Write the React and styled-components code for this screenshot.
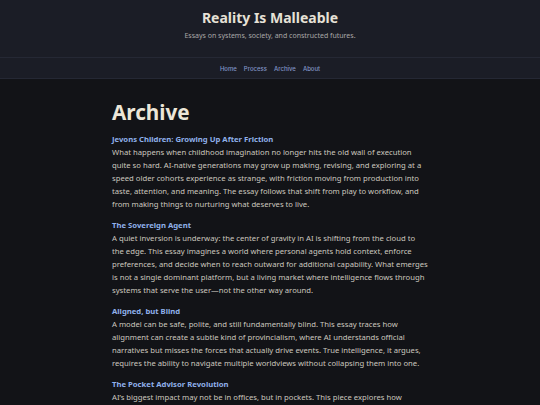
import React from 'react';
import styled, { createGlobalStyle } from 'styled-components';

const GlobalStyle = createGlobalStyle`
  html, body {
    margin: 0;
    padding: 0;
    background: #121317;
  }
  body {
    font-family: "Noto Sans", "Open Sans", sans-serif;
    color: #cbc7bf;
  }
  * { box-sizing: border-box; }
`;

const essays = [
  {
    title: 'Jevons Children: Growing Up After Friction',
    text:
      'What happens when childhood imagination no longer hits the old wall of execution quite so hard. AI-native generations may grow up making, revising, and exploring at a speed older cohorts experience as strange, with friction moving from production into taste, attention, and meaning. The essay follows that shift from play to workflow, and from making things to nurturing what deserves to live.',
  },
  {
    title: 'The Sovereign Agent',
    text:
      'A quiet inversion is underway: the center of gravity in AI is shifting from the cloud to the edge. This essay imagines a world where personal agents hold context, enforce preferences, and decide when to reach outward for additional capability. What emerges is not a single dominant platform, but a living market where intelligence flows through systems that serve the user\u2014not the other way around.',
  },
  {
    title: 'Aligned, but Blind',
    text:
      'A model can be safe, polite, and still fundamentally blind. This essay traces how alignment can create a subtle kind of provincialism, where AI understands official narratives but misses the forces that actually drive events. True intelligence, it argues, requires the ability to navigate multiple worldviews without collapsing them into one.',
  },
  {
    title: 'The Pocket Advisor Revolution',
    text:
      'AI\u2019s biggest impact may not be in offices, but in pockets. This piece explores how personal advisors could reshape everyday decisions for people who never had access to expert counsel.',
  },
];

const navLinks = ['Home', 'Process', 'Archive', 'About'];

const App = () => {
  return (
    <>
      <GlobalStyle />
      <SiteHeader>
        <SiteTitle>Reality Is Malleable</SiteTitle>
        <Tagline>Essays on systems, society, and constructed futures.</Tagline>
      </SiteHeader>
      <NavBar>
        {navLinks.map(link => (
          <NavLink key={link} href="#">
            {link}
          </NavLink>
        ))}
      </NavBar>
      <Main>
        <PageTitle>Archive</PageTitle>
        <EssayList>
          {essays.map(essay => (
            <Essay key={essay.title}>
              <EssayTitle href="#">{essay.title}</EssayTitle>
              <EssayText>{essay.text}</EssayText>
            </Essay>
          ))}
        </EssayList>
      </Main>
    </>
  );
};

export default App;

const SiteHeader = styled.header`
  display: flex;
  flex-direction: column;
  align-items: center;
  background: #1b1d26;
  padding: 8px 0 16px;
  border-bottom: 1px solid #252834;
`;

const SiteTitle = styled.h1`
  margin: 0;
  font-size: 14px;
  line-height: 20px;
  font-weight: 700;
  color: #e6e1d6;
`;

const Tagline = styled.p`
  margin: 2px 0 0;
  font-size: 7px;
  line-height: 11px;
  color: #a9a8a6;
`;

const NavBar = styled.nav`
  display: flex;
  justify-content: center;
  gap: 7px;
  background: #1b1d26;
  height: 21px;
  align-items: center;
  border-bottom: 1px solid #252834;
`;

const NavLink = styled.a`
  font-family: Inter, "Noto Sans", sans-serif;
  font-size: 6px;
  font-weight: 500;
  color: #8295c6;
  text-decoration: none;
`;

const Main = styled.main`
  width: 316px;
  margin: 0 auto;
  padding-top: 18px;
`;

const PageTitle = styled.h2`
  margin: 0 0 6px;
  font-size: 20.7px;
  line-height: 30px;
  font-weight: 700;
  color: #ece6d8;
`;

const EssayList = styled.div`
  display: flex;
  flex-direction: column;
  gap: 8px;
`;

const Essay = styled.section`
  display: flex;
  flex-direction: column;
`;

const EssayTitle = styled.a`
  font-size: 7.7px;
  line-height: 13px;
  font-weight: 700;
  color: #8fb0ea;
  text-decoration: none;
`;

const EssayText = styled.p`
  margin: 0;
  font-size: 7.7px;
  line-height: 13px;
  color: #cbc7bf;
`;
